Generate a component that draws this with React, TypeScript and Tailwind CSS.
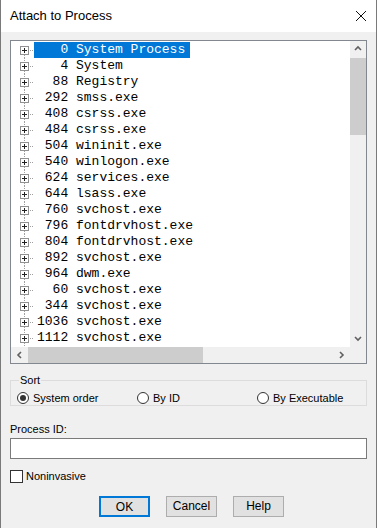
import { useState } from 'react';

const processes: [number, string][] = [
  [0, 'System Process'],
  [4, 'System'],
  [88, 'Registry'],
  [292, 'smss.exe'],
  [408, 'csrss.exe'],
  [484, 'csrss.exe'],
  [504, 'wininit.exe'],
  [540, 'winlogon.exe'],
  [624, 'services.exe'],
  [644, 'lsass.exe'],
  [760, 'svchost.exe'],
  [796, 'fontdrvhost.exe'],
  [804, 'fontdrvhost.exe'],
  [892, 'svchost.exe'],
  [964, 'dwm.exe'],
  [60, 'svchost.exe'],
  [344, 'svchost.exe'],
  [1036, 'svchost.exe'],
  [1112, 'svchost.exe'],
];

function TreeNode({ first }: { first: boolean }) {
  return (
    <svg width="23" height="16" shapeRendering="crispEdges" className="shrink-0">
      {!first && <line x1="13.5" y1="0" x2="13.5" y2="4" stroke="#a0a0a0" strokeDasharray="1 1" />}
      <line x1="13.5" y1="13" x2="13.5" y2="16" stroke="#a0a0a0" strokeDasharray="1 1" />
      <line x1="19" y1="8.5" x2="23" y2="8.5" stroke="#a0a0a0" strokeDasharray="1 1" />
      <rect x="9.5" y="4.5" width="8" height="8" fill="#fff" stroke="#919191" />
      <line x1="11" y1="8.5" x2="16" y2="8.5" stroke="#222" />
      <line x1="13.5" y1="6" x2="13.5" y2="11" stroke="#222" />
    </svg>
  );
}

function Chevron({ dir }: { dir: 'up' | 'down' | 'left' | 'right' }) {
  const paths = {
    up: 'M1 5 L4 2 L7 5',
    down: 'M1 2 L4 5 L7 2',
    left: 'M5 1 L2 4 L5 7',
    right: 'M2 1 L5 4 L2 7',
  };
  return (
    <svg width="8" height="8" viewBox="0 0 8 8">
      <path d={paths[dir]} fill="none" stroke="#606060" strokeWidth="1.6" />
    </svg>
  );
}

function Radio({ checked, label, onClick }: { checked: boolean; label: string; onClick: () => void }) {
  return (
    <button type="button" onClick={onClick} className="flex items-center gap-[4px]">
      <span className="w-[12px] h-[12px] rounded-full border border-[#333] bg-white flex items-center justify-center">
        {checked && <span className="w-[6px] h-[6px] rounded-full bg-[#333]" />}
      </span>
      <span>{label}</span>
    </button>
  );
}

export default function App() {
  const [sort, setSort] = useState('system');
  const [pid, setPid] = useState('');
  const [nonInvasive, setNonInvasive] = useState(false);

  return (
    <div className="w-[377px] h-[528px] bg-[#f0f0f0] border-x border-[#7a7a7a] flex flex-col text-[11px] text-black overflow-hidden" style={{ fontFamily: '"Liberation Sans", Arial, sans-serif' }}>
      {/* title bar */}
      <div className="h-[32px] bg-white flex items-center justify-between pl-[9px] pr-[8px] shrink-0">
        <span className="text-[13px]">Attach to Process</span>
        <svg width="12" height="12" viewBox="0 0 12 12" className="mr-[1px]">
          <path d="M1 1 L11 11 M11 1 L1 11" stroke="#111" strokeWidth="1" />
        </svg>
      </div>

      <div className="flex flex-col px-[9px]">
        {/* process list */}
        <div className="mt-[8px] h-[324px] border border-[#828790] bg-white grid grid-cols-[1fr_16px] grid-rows-[1fr_16px]">
          <div className="overflow-hidden pt-[1px]" style={{ fontFamily: '"Liberation Mono", "Courier New", monospace' }}>
            {processes.map(([id, name], i) => (
              <div key={i} className="h-[16px] flex items-center text-[13px] leading-[16px] whitespace-pre">
                <TreeNode first={i === 0} />
                <span className={i === 0 ? 'bg-[#0078d7] text-white pl-[3px] pr-[5px]' : 'pl-[3px]'}>
                  {String(id).padStart(4, ' ') + ' ' + name}
                </span>
              </div>
            ))}
          </div>
          <div className="bg-[#f0f0f0] flex flex-col">
            <div className="h-[16px] flex items-center justify-center"><Chevron dir="up" /></div>
            <div className="h-[77px] mt-[1px] bg-[#cdcdcd]" />
            <div className="flex-1" />
            <div className="h-[16px] flex items-center justify-center"><Chevron dir="down" /></div>
          </div>
          <div className="bg-[#f0f0f0] flex">
            <div className="w-[17px] flex items-center justify-center"><Chevron dir="left" /></div>
            <div className="w-[175px] bg-[#cdcdcd]" />
            <div className="flex-1" />
            <div className="w-[17px] flex items-center justify-center"><Chevron dir="right" /></div>
          </div>
          <div className="bg-[#f0f0f0]" />
        </div>

        {/* sort group */}
        <fieldset className="mt-[9px] border border-[#dcdcdc] pl-[6px]">
          <legend className="ml-[2px] px-[1px] leading-[14px]">Sort</legend>
          <div className="flex items-center h-[14px] mt-[4px]">
            <div className="w-[120px]">
              <Radio checked={sort === 'system'} label="System order" onClick={() => setSort('system')} />
            </div>
            <div className="w-[120px]">
              <Radio checked={sort === 'id'} label="By ID" onClick={() => setSort('id')} />
            </div>
            <Radio checked={sort === 'exe'} label="By Executable" onClick={() => setSort('exe')} />
          </div>
        </fieldset>

        {/* process id */}
        <label className="mt-[16px] leading-[14px]">Process ID:</label>
        <input
          value={pid}
          onChange={e => setPid(e.target.value)}
          className="mt-[2px] h-[21px] border border-[#7a7a7a] bg-white px-[3px] outline-none"
        />

        {/* noninvasive */}
        <label className="mt-[9px] flex items-center gap-[3px] cursor-default">
          <span
            onClick={() => setNonInvasive(v => !v)}
            className="w-[13px] h-[13px] border border-[#333] bg-white flex items-center justify-center text-[10px]"
          >
            {nonInvasive ? '✓' : ''}
          </span>
          <span>Noninvasive</span>
        </label>

        {/* buttons */}
        <div className="mt-[11px] flex justify-center gap-[16px] pl-[6px]">
          <button className="w-[51px] h-[21px] bg-[#e1e1e1] border-2 border-[#0078d7] text-[12px]">OK</button>
          <button className="w-[51px] h-[21px] bg-[#e1e1e1] border border-[#adadad] text-[12px]">Cancel</button>
          <button className="w-[51px] h-[21px] bg-[#e1e1e1] border border-[#adadad] text-[12px]">Help</button>
        </div>
      </div>
    </div>
  );
}
